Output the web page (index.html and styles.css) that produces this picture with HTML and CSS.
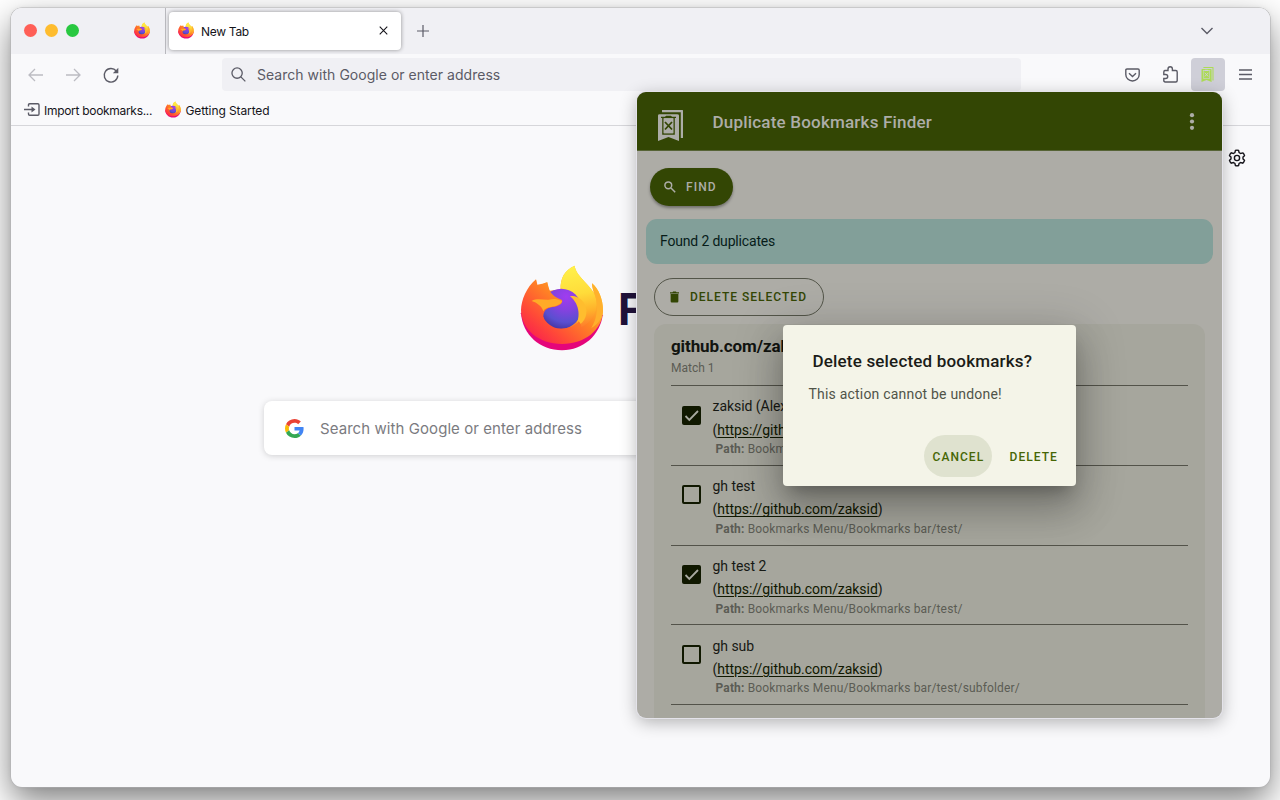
FILE: index.html
```html
<!DOCTYPE html>
<html lang="en">
<head>
<meta charset="utf-8">
<title>New Tab</title>
<link rel="stylesheet" href="styles.css">
</head>
<body>
<svg class="defs" aria-hidden="true">
  <defs>
    <linearGradient id="fx-body" gradientUnits="userSpaceOnUse" x1="290" y1="90" x2="130" y2="280"><stop offset="0.1" stop-color="#ffc832"/><stop offset="0.47" stop-color="#ff8524"/><stop offset="0.8" stop-color="#ff4b37"/><stop offset="1" stop-color="#fb2a48"/></linearGradient>
    <linearGradient id="fx-flame" x1="0.4" y1="0" x2="0.5" y2="1"><stop offset="0" stop-color="#fff14a"/><stop offset="0.45" stop-color="#ffdc3a"/><stop offset="0.75" stop-color="#ffb02a"/><stop offset="1" stop-color="#ff7a2c"/></linearGradient>
    <radialGradient id="fx-orb" cx="0.62" cy="0.2" r="0.85"><stop offset="0" stop-color="#a03cf0"/><stop offset="0.4" stop-color="#8442df"/><stop offset="0.75" stop-color="#5a4fd0"/><stop offset="1" stop-color="#46349f"/></radialGradient>
    <symbol id="firefox" viewBox="60 45 252 258">
      <path fill="#e5067a" d="M63 190C68 255 120 301 186 301C250 301 300 255 308 196L290 170L80 170Z"/>
      <path fill="url(#fx-body)" d="M108 88C111 96 112 106 114 114C120 106 131 100 142 96C142 106 144 114 149 122L182 118C180 86 194 59 224 47C226 64 238 77 254 95C266 108 275 118 282 128C280 118 276 110 276 100C296 117 309 147 309 183C307 240 254 282 186 282C116 282 64 238 63 180C64 151 79 112 108 88Z"/>
      <path fill="url(#fx-flame)" d="M182 118C180 86 194 59 224 47C226 64 238 77 254 95C275 116 291 137 290 166C286 207 262 226 232 236L182 220Z"/>
      <path fill="#ffb02c" d="M276 100C296 117 309 147 309 183C307 205 295 222 274 234C289 210 298 173 284 132C279 122 276 112 276 100Z"/>
      <circle cx="184" cy="176" r="60" fill="url(#fx-orb)"/>
      <path fill="#ffbd2e" d="M210 139C230 134 252 151 258 172C264 200 250 224 222 234C243 208 241 163 210 139Z"/>
      <path fill="url(#fx-body)" d="M108 105L142 98L149 122C156 134 166 142 186 150C189 160 178 169 158 171C139 173 130 184 130 200C134 224 156 237 184 236C206 236 224 228 236 214C262 240 220 260 176 258C120 250 84 200 88 150Z"/>
      <path fill="#ffab27" d="M95 153C109 144 130 150 146 149C160 146 171 146 186 154C182 164 168 169 153 171C141 173 134 176 130 184C126 169 111 158 95 153Z"/>
    </symbol>
    <symbol id="dbf" viewBox="0 0 27 31">
      <path fill="currentColor" d="M5 0H25.500Q26 0 26 1V28H23.800V2.200H5Z"/>
      <path fill="currentColor" fill-rule="evenodd" d="M1 5.500Q1 4.200 2.500 4.200H20Q22 4.200 22 5.500V31L11.500 27L1 31ZM4 8H5.200V24.700H17.800V8H19V6.800H15L14 5.800H9L8 6.800H4ZM6.700 8.300H16.300V23.200H6.700Z"/>
      <path fill="currentColor" d="M6.700 8.300H16.300V23.200H6.700Z"/>
      <path d="M8 12L15 19.500M15 12L8 19.500" stroke="var(--cross)" stroke-width="1.800"/>
    </symbol>
    <symbol id="check" viewBox="0 0 19 19"><path d="M3.500 10L7.300 13.900L16 5" fill="none" stroke="#a8a99f" stroke-width="1.800"/></symbol>
  </defs>
</svg>

<div class="window">
  <div class="tabbar">
    <div class="lights"><i class="red"></i><i class="yellow"></i><i class="green"></i></div>
    <svg class="fx pinned"><use href="#firefox"/></svg>
    <div class="tab">
      <svg class="fx"><use href="#firefox"/></svg>
      <span class="tab-title">New Tab</span>
      <svg class="close" viewBox="0 0 10 10"><path d="M.8.8L9.200 9.200M9.200.8L.8 9.200"/></svg>
    </div>
    <svg class="plus" viewBox="0 0 12 12"><path d="M6 0V12M0 6H12"/></svg>
    <svg class="chevron" viewBox="0 0 12 8"><path d="M.5 1L6 6.500L11.500 1"/></svg>
  </div>
  <div class="toolbar">
    <svg class="arrow" viewBox="0 0 15 14"><path d="M7 1L1 7L7 13M1 7H15"/></svg>
    <svg class="arrow forward" viewBox="0 0 15 14"><path d="M8 1L14 7L8 13M14 7H0"/></svg>
    <svg class="reload" viewBox="0 0 16 16"><path d="M13.300 4A6.800 6.800 0 1 0 14.800 8.500"/><path class="solid" d="M15.300.8V6.300H9.800Z"/></svg>
    <div class="urlbar">
      <svg viewBox="0 0 16 16"><circle cx="6.500" cy="6.500" r="5.500"/><path d="M10.500 10.500L15.300 15.300"/></svg>
      <span>Search with Google or enter address</span>
    </div>
    <svg class="pocket" viewBox="0 0 15 14"><path d="M2 1H13Q14.200 1 14.200 2.200V6.500A6.700 6.500 0 0 1 .8 6.500V2.200Q.8 1 2 1Z"/><path d="M4 5.200L7.500 8.500L11 5.200"/></svg>
    <svg class="puzzle" viewBox="0 0 15 17"><path d="M1.500 4.500H5V3A2.200 2.200 0 0 1 9.400 3V4.500H12.800Q14.200 4.500 14.200 6V14.500Q14.200 16 12.800 16H2.200Q.8 16 .8 14.500V12.500H2.700A2 2 0 0 0 2.700 8.500H.8V6Q.8 4.500 2.200 4.500"/></svg>
    <div class="ext"><svg viewBox="0 0 27 31"><use href="#dbf"/></svg></div>
    <svg class="menu" viewBox="0 0 13 11"><path d="M0 1H13M0 5.500H13M0 10H13"/></svg>
  </div>
  <div class="bookmarks">
    <svg class="import" viewBox="0 0 16 13"><path d="M4.500 3.500V2Q4.500.8 5.700.8H13.800Q15 .8 15 2V11Q15 12.200 13.800 12.200H5.700Q4.500 12.200 4.500 11V9.500M0 6.500H10"/><path class="solid" d="M7.500 3.500L11.500 6.500L7.500 9.500Z"/></svg>
    <span class="bm-import">Import bookmarks...</span>
    <svg class="fx"><use href="#firefox"/></svg>
    <span class="bm-start">Getting Started</span>
  </div>
  <div class="page">
    <svg class="gear" viewBox="0 0 18 18"><path d="M7.400 1.500Q9 .8 10.600 1.500L11.100 3.600L12.700 4.500L14.800 3.900Q16.200 5 16.500 6.700L15 8.100V9.900L16.500 11.300Q16.100 13 14.800 14.100L12.700 13.500L11.100 14.400L10.600 16.500Q9 17.200 7.400 16.500L6.900 14.400L5.300 13.500L3.200 14.100Q1.900 13 1.500 11.300L3 9.900V8.100L1.500 6.700Q1.900 5 3.200 3.900L5.300 4.500L6.900 3.600Z"/><circle cx="9" cy="9" r="2.600"/></svg>
    <div class="brand"><svg><use href="#firefox"/></svg><span>F</span></div>
    <div class="searchbox">
      <svg viewBox="0 0 48 48"><path fill="#EA4335" d="M24 9.500c3.540 0 6.710 1.220 9.210 3.600l6.850-6.850C35.900 2.380 30.470 0 24 0 14.620 0 6.510 5.380 2.560 13.220l7.980 6.190C12.430 13.720 17.740 9.500 24 9.500z"/><path fill="#4285F4" d="M46.980 24.550c0-1.570-.15-3.090-.38-4.550H24v9.020h12.940c-.58 2.960-2.260 5.480-4.780 7.180l7.730 6c4.510-4.180 7.090-10.360 7.090-17.650z"/><path fill="#FBBC05" d="M10.530 28.590c-.48-1.450-.76-2.990-.76-4.590s.27-3.140.76-4.590l-7.980-6.190C.92 16.460 0 20.120 0 24c0 3.880.92 7.540 2.560 10.780l7.970-6.190z"/><path fill="#34A853" d="M24 48c6.480 0 11.930-2.130 15.890-5.810l-7.730-6c-2.150 1.450-4.920 2.300-8.160 2.300-6.260 0-11.570-4.220-13.470-9.910l-7.980 6.190C6.510 42.620 14.620 48 24 48z"/></svg>
      <span>Search with Google or enter address</span>
    </div>
  </div>
</div>

<div class="popup">
  <div class="appbar">
    <svg class="logo" viewBox="0 0 27 31"><use href="#dbf"/></svg>
    <span class="app-title">Duplicate Bookmarks Finder</span>
    <svg class="dots" viewBox="0 0 4 17"><circle cx="2" cy="2.200" r="2.100"/><circle cx="2" cy="8.500" r="2.100"/><circle cx="2" cy="14.800" r="2.100"/></svg>
  </div>
  <div class="find"><svg viewBox="0 0 12 12"><circle cx="4.300" cy="4.300" r="3.400"/><path d="M7 7L11.200 11.200"/></svg><span>FIND</span></div>
  <div class="alert"><span>Found 2 duplicates</span></div>
  <div class="delete-selected"><svg viewBox="0 0 10 12"><path d="M0 .7H2.800L3.400 0H6.600L7.200 .7H10V2H0ZM.7 2.700H9.300V10.700Q9.300 12 8 12H2Q.7 12 .7 10.700Z"/></svg><span>DELETE SELECTED</span></div>
  <div class="card">
    <div class="card-head">
      <span class="domain">github.com/zaksid</span>
      <span class="match">Match 1</span>
    </div>
    <div class="item"><svg class="box on"><use href="#check"/></svg><div class="info"><span class="name">zaksid (Alex Zaksid)</span><span class="url">(<u>https://github.com/zaksid</u>)</span><span class="path"><b>Path:</b> Bookmarks Menu/</span></div></div>
    <div class="item"><svg class="box"></svg><div class="info"><span class="name">gh test</span><span class="url">(<u>https://github.com/zaksid</u>)</span><span class="path"><b>Path:</b> Bookmarks Menu/Bookmarks bar/test/</span></div></div>
    <div class="item"><svg class="box on"><use href="#check"/></svg><div class="info"><span class="name">gh test 2</span><span class="url">(<u>https://github.com/zaksid</u>)</span><span class="path"><b>Path:</b> Bookmarks Menu/Bookmarks bar/test/</span></div></div>
    <div class="item"><svg class="box"></svg><div class="info"><span class="name">gh sub</span><span class="url">(<u>https://github.com/zaksid</u>)</span><span class="path"><b>Path:</b> Bookmarks Menu/Bookmarks bar/test/subfolder/</span></div></div>
  </div>
  <div class="dialog">
    <span class="dialog-title">Delete selected bookmarks?</span>
    <span class="dialog-text">This action cannot be undone!</span>
    <div class="actions"><span class="cancel">CANCEL</span><span class="delete">DELETE</span></div>
  </div>
</div>
</body>
</html>
```

FILE: styles.css
```css
* { box-sizing: border-box; }
html, body { margin: 0; height: 800px; overflow: hidden; background: #fff; }
body { position: relative; padding: 8px 10.500px; font-family: Inter, "Liberation Sans", sans-serif; }
svg { display: block; flex: none; fill: none; stroke: #5b5b66; stroke-width: 1.4; overflow: visible; }
symbol, use { stroke: none; }
span { white-space: nowrap; display: block; }
.defs { position: absolute; width: 0; height: 0; }

.window { width: 1259px; height: 779px; border-radius: 11px; overflow: hidden; background: #f9f9fb; box-shadow: 0 0 0 .6px #b4b4b6, 0 14px 34px rgba(0,0,0,.5), 0 0 5px rgba(0,0,0,.08); }
.solid { fill: #5b5b66; stroke: none; }
.fx { width: 16px; height: 17px; }

.tabbar { display: flex; align-items: center; height: 46px; padding-bottom: 1px; background: #f0f0f4; }
.lights { display: flex; gap: 8px; margin-left: 13px; }
.lights i { width: 13px; height: 13px; border-radius: 50%; }
.red { background: #ff5f57; }
.yellow { background: #febc2e; }
.green { background: #28c840; }
.pinned { margin-left: 55px; }
.tab { display: flex; align-items: center; width: 232px; height: 38px; margin-left: 19.500px; padding-left: 9px; border-radius: 4px; background: #fff; box-shadow: 0 0 4px rgba(0,0,0,.4); position: relative; }
.tab::before { content: ""; position: absolute; left: -4px; top: -4px; width: 1px; height: 46px; background: #b8b8bd; }
.tab-title { margin: 2px 0 0 7px; font-size: 12px; letter-spacing: -.3px; color: #15141a; width: 178px; }
.close { width: 9px; height: 9px; stroke: #15141a; stroke-width: 1.200; }
.plus { width: 12px; height: 12px; margin-left: 16px; stroke-width: 1.200; }
.chevron { width: 12px; height: 8px; margin-left: 772px; }

.toolbar { display: flex; align-items: center; height: 41px; padding-left: 17.500px; }
.arrow { width: 15px; height: 14px; stroke: #bcbcc2; stroke-width: 1.300; }
.forward { margin-left: 22.500px; }
.reload { width: 16px; height: 16px; margin-left: 22px; }
.urlbar { display: flex; align-items: center; width: 799px; height: 33px; margin-left: 103.500px; padding-left: 9px; border-radius: 4px; background: #f0f0f4; color: #5b5b66; font-size: 14px; letter-spacing: .03px; }
.urlbar svg { width: 15px; height: 15px; }
.urlbar span { margin-left: 11px; }
.pocket { width: 15px; height: 14px; margin-left: 103.500px; }
.puzzle { width: 15px; height: 17px; margin-left: 23px; margin-top: -1px; }
.ext { display: flex; align-items: center; justify-content: center; width: 34px; height: 33px; margin-left: 13px; border-radius: 4px; background: #cfcfd8; color: #addb57; --cross: #cfcfd8; }
.ext svg { width: 13px; height: 15px; }
.menu { width: 13px; height: 11px; margin-left: 14px; }

.bookmarks { display: flex; align-items: center; height: 31px; padding: 0 0 1px 13.500px; border-bottom: 1px solid #d6d6da; color: #15141a; font-size: 12px; }
.bookmarks span { padding-top: 1px; }
.import { width: 16px; height: 13px; }
.bm-import { width: 109px; margin-left: 4px; letter-spacing: -.3px; }
.bookmarks .fx { margin-left: 12px; }
.bm-start { margin-left: 4.500px; letter-spacing: -.1px; }

.page { display: flex; flex-direction: column; }
.gear { width: 18px; height: 18px; margin: 23px 0 0 1217.500px; stroke: #15141a; stroke-width: 1.400; }
.brand { display: flex; align-items: center; height: 86px; margin: 98px 0 0 509.500px; color: #20123a; font-weight: 700; font-size: 44px; }
.brand svg { width: 84px; height: 86px; }
.brand span { margin: 2px 0 0 14px; }
.searchbox { display: flex; align-items: center; width: 740px; height: 54px; margin: 50px 0 0 253.500px; padding-left: 21px; border-radius: 8px; background: #fff; box-shadow: 0 1px 6px rgba(0,0,0,.17); color: #7b7b7f; font-size: 15px; letter-spacing: .07px; }
.searchbox svg { width: 19px; height: 19px; stroke: none; }
.searchbox span { margin: 1px 0 0 16px; }

/* Extension popup, drawn over the browser window */
.popup { position: absolute; left: 637px; top: 92px; width: 585px; height: 626px; border-radius: 9px; overflow: hidden; background: #adaca6; font-family: Roboto, "Liberation Sans", sans-serif; box-shadow: 0 0 0 1px #e4e3ea, 0 4px 17px rgba(0,0,0,.3); }
.appbar { display: flex; align-items: center; height: 59px; padding-left: 20px; background: #334604; border-bottom: 1px solid #566335; color: #adada8; }
.logo { width: 27px; height: 31px; margin-top: 8px; --cross: #334604; }
.app-title { width: 480px; margin: 1px 0 0 28.500px; font-size: 17px; font-weight: 500; letter-spacing: .2px; }
.dots { width: 4px; height: 17px; margin-left: -2.500px; fill: #adada8; stroke: none; }
.find { display: flex; align-items: center; width: 83px; height: 38px; margin: 17px 0 0 13px; padding-left: 14px; border-radius: 19px; background: #334604; color: #adada8; font-size: 12px; font-weight: 500; letter-spacing: 1.100px; box-shadow: 0 2px 3px rgba(0,0,0,.35); }
.find svg { width: 12px; height: 12px; stroke: #adada8; stroke-width: 1.500; }
.find span { margin-left: 10px; }
.alert { display: flex; align-items: center; width: 567px; height: 45px; margin: 13px 0 0 9px; padding: 0 0 1px 14px; border-radius: 11px; background: #829f99; color: #071c19; font-size: 14px; letter-spacing: -.17px; }
.delete-selected { display: flex; align-items: center; width: 170px; height: 38px; margin: 14px 0 0 17px; padding-left: 15px; border: 1px solid #535549; border-radius: 19px; color: #334604; font-size: 12px; font-weight: 500; letter-spacing: 1px; }
.delete-selected svg { width: 9px; height: 12px; fill: #334604; stroke: none; }
.delete-selected span { margin-left: 11px; }
.card { width: 551px; height: 430px; margin: 8px 0 0 17px; padding: 0 17px; border-radius: 12px 12px 0 0; background: #a6a69d; }
.card-head { height: 62px; padding-top: 11px; border-bottom: 1px solid #53534a; }
.domain { height: 22px; line-height: 23px; font-size: 17px; font-weight: 700; color: #121410; letter-spacing: -.1px; }
.match { height: 20px; line-height: 22px; font-size: 12px; color: #5b5c54; letter-spacing: 0; }
.item { display: flex; height: 79.750px; border-bottom: 1px solid #53534a; }
.box { width: 19px; height: 19px; margin: 19.500px 0 0 11px; border: 2px solid #101800; border-radius: 2px; }
.box.on { border: 0; background: #101800; }
.info { margin-left: 11.500px; padding-top: 9.300px; color: #171914; }
.name, .url { height: 23.400px; line-height: 23.400px; font-size: 14px; letter-spacing: -.05px; }
.url u { color: #101800; text-underline-offset: 2px; }
.path { height: 16px; line-height: 15.500px; padding-left: 3px; font-size: 12px; letter-spacing: .15px; color: #5b5c54; }

.dialog { position: absolute; left: 146px; top: 233px; width: 293px; height: 160.500px; padding: 23px 9px 0 25px; border-radius: 4px; background: #f4f4e8; box-shadow: 0 11px 15px -7px rgba(0,0,0,.25), 0 24px 38px 3px rgba(0,0,0,.18), 0 9px 46px 8px rgba(0,0,0,.15); }
.dialog-title { height: 25px; line-height: 26px; padding-left: 4.500px; font-size: 17px; font-weight: 500; color: #1b1c18; letter-spacing: .18px; }
.dialog-text { height: 62px; line-height: 43px; padding-left: .5px; font-size: 14px; letter-spacing: .2px; color: #505348; }
.actions { display: flex; justify-content: flex-end; color: #466605; font-size: 12px; font-weight: 500; letter-spacing: 1.050px; line-height: 44px; }
.cancel { width: 68px; height: 42px; padding-left: 8.500px; border-radius: 21px; background: #dfe2cf; }
.delete { width: 67px; margin-left: 8px; padding-left: 9.500px; }
```
